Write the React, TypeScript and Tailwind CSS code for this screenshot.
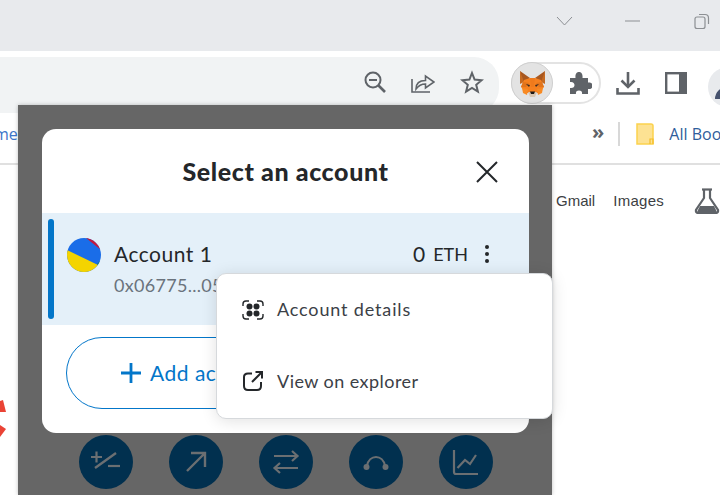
import React from 'react'

const mm = "font-['Lato','Inter',sans-serif]"

function Fox() {
  return (
    <svg viewBox="0 0 27 27" className="w-[27px] h-[27px]">
      <polygon points="1,1 11,8 5,12 2,11" fill="#a8571f" />
      <polygon points="26,1 16,8 22,12 25,11" fill="#a8571f" />
      <polygon points="1,1 5,12 1,14" fill="#c56a22" />
      <polygon points="26,1 22,12 26,14" fill="#c56a22" />
      <polygon points="5,10 11,8 16,8 22,10 25,17 20,23 7,23 2,17" fill="#f5801f" />
      <polygon points="11,8 16,8 15,17 12,17" fill="#ef7a1c" />
      <polygon points="4,12 10,13 7,17 2,17" fill="#e2741b" />
      <polygon points="23,12 17,13 20,17 25,17" fill="#e2741b" />
      <polygon points="7,14 11,15 10,17" fill="#3a2a22" />
      <polygon points="20,14 16,15 17,17" fill="#3a2a22" />
      <polygon points="3,18 9,19 8,25 4,23" fill="#f88a23" />
      <polygon points="24,18 18,19 19,25 23,23" fill="#f88a23" />
      <polygon points="9,22 18,22 16,27 11,27" fill="#d8c6b2" />
      <polygon points="11,21.5 16,21.5 15,24 12,24" fill="#1c1714" />
    </svg>
  )
}

function RoundButton({ children }: { children: React.ReactNode }) {
  return (
    <div className="w-[54px] h-[54px] rounded-full bg-[#01304f] flex items-center justify-center">
      <svg viewBox="0 0 54 54" className="w-[54px] h-[54px]" fill="none" stroke="#6b6f72" strokeWidth="2.2">
        {children}
      </svg>
    </div>
  )
}

export default function App() {
  return (
    <div className="relative w-[720px] h-[495px] overflow-hidden bg-white font-['Liberation_Sans',sans-serif]">
      {/* title bar */}
      <div className="h-[51px] bg-[#e8eaed] flex">
        <svg viewBox="0 0 170 51" className="w-[170px] h-[51px] ml-auto" fill="none" stroke="#8c8f93" strokeWidth="1">
          <path d="M7 17 L14.5 25 L22 17" />
          <path d="M75 21 H90" />
          <rect x="145" y="17" width="10" height="11.5" rx="2" strokeWidth="1.2" />
          <path d="M149 14.5 H155 Q158.5 14.5 158.5 18 V24" strokeWidth="1.2" />
        </svg>
      </div>

      {/* toolbar */}
      <div className="h-[56px] flex items-start">
        <div className="w-[499px] shrink-0 h-[56px] mt-[6px] bg-[#f1f3f4] rounded-r-[25px] flex items-center justify-end gap-[25px] pr-[15px] pb-[7px]">
          <svg viewBox="0 0 22 22" className="w-[22px] h-[22px]" fill="none" stroke="#5f6368" strokeWidth="2">
            <circle cx="9" cy="9" r="7.5" />
            <path d="M5 9 H13" />
            <path d="M14.5 14.5 L21 21" strokeWidth="2.6" />
          </svg>
          <svg viewBox="0 0 24 22" className="w-[24px] h-[22px]" fill="none" stroke="#5f6368" strokeWidth="1.6">
            <path d="M1 8 V21 H19" />
            <path d="M5 18 C5 12 9 9.5 14.5 9.5 V5 L23 11 L14.5 17 V13 C10 13 7.5 14.5 5 18 Z" />
          </svg>
          <svg viewBox="0 0 24 24" className="w-[24px] h-[24px]" fill="none" stroke="#5f6368" strokeWidth="2">
            <path d="M12 3 L14.6 9.6 L21.6 10.2 L16.2 14.8 L17.9 21.6 L12 18 L6.1 21.6 L7.8 14.8 L2.4 10.2 L9.4 9.6 Z" />
          </svg>
        </div>
        <div className="ml-[12px] mt-[11px] w-[90px] shrink-0 h-[42px] rounded-full border-2 border-[#e3e3e3] flex items-center relative">
          <div className="w-[42px] h-[42px] -ml-[2px] rounded-full bg-[#e3e3e3] border border-[#cfcfcf] flex items-center justify-center shrink-0">
            <Fox />
          </div>
          <svg viewBox="0 0 24 24" className="w-[24px] h-[24px] ml-[15px]" fill="#5f6368">
            <path d="M2 7 H7.5 C7 2.5 9 1 11 1 C13 1 15 2.5 14.5 7 H20 V11.5 C24 11 24.5 13.5 24.5 15 C24.5 17 23 18.5 20 18 V23 H14 C14.5 20.5 13 19.5 11 19.5 C9 19.5 7.5 20.5 8 23 H2 V17 C5 17.5 6.5 16 6.5 14 C6.5 12 5 10.5 2 11 Z" />
          </svg>
        </div>
        <svg viewBox="0 0 24 24" className="w-[24px] h-[24px] shrink-0 ml-[15px] mt-[20px]" fill="none" stroke="#5f6368" strokeWidth="2.6">
          <path d="M12 1 V15" />
          <path d="M5.5 9.5 L12 16 L18.5 9.5" />
          <path d="M1.5 17 V22.5 H22.5 V17" />
        </svg>
        <svg viewBox="0 0 22 22" className="w-[22px] h-[22px] shrink-0 ml-[25px] mt-[21px]" fill="none">
          <rect x="1.2" y="1.2" width="19.6" height="19.6" stroke="#5f6368" strokeWidth="2.4" />
          <rect x="14" y="1" width="7" height="20" fill="#5f6368" />
        </svg>
        <div className="w-[40px] h-[40px] ml-[21px] mt-[16px] shrink-0 rounded-full bg-[#e8eaed] overflow-hidden flex items-end justify-start">
          <div className="w-[24px] h-[12px] mb-[8px] ml-[7px] shrink-0 rounded-t-full bg-[#46526e]" />
        </div>
      </div>

      {/* bookmarks bar */}
      <div className="h-[58px] border-b-2 border-[#e0e0e0] flex items-center pb-[2px] whitespace-nowrap text-[16px] font-['Open_Sans',sans-serif] text-[#3c4043]">
        <span className="w-[26px] -ml-[6px] shrink-0 text-[#3d76c9]">me</span>
        <span className="ml-[572px] shrink-0 text-[#5f6368] font-bold text-[20px] leading-none -mt-[4px]">»</span>
        <div className="ml-[14px] w-[2px] shrink-0 h-[24px] bg-[#d8d8d8]" />
        <svg viewBox="0 0 18 22" className="w-[18px] h-[22px] shrink-0 ml-[16px]">
          <path d="M1 1 H15 Q17 1 17 3 V21 H1 Z" fill="#fde293" stroke="#fbd24e" strokeWidth="1.5" />
          <path d="M14 21 V16 H17 V21" fill="none" stroke="#f4bd2a" strokeWidth="1.2" />
        </svg>
        <span className="ml-[15px] shrink-0 text-[#2f5d9b]">All Bookmarks</span>
      </div>

      {/* page links */}
      <div className="flex items-center pl-[556px] h-[74px] -mt-[1px] text-[15px] text-[#3c4043] whitespace-nowrap">
        <span className="shrink-0">Gmail</span>
        <span className="ml-[18px] shrink-0 tracking-[0.3px]">Images</span>
        <svg viewBox="0 0 26 26" className="w-[26px] h-[26px] ml-[30px] shrink-0" fill="none" stroke="#5f6368" strokeWidth="2.2">
          <path d="M8 1.5 H18" />
          <path d="M10 2 V10 L2 22 Q1.5 25 4 25 H22 Q24.5 25 24 22 L16 10 V2" />
          <path d="M6 18 H20 L23 24 H3 Z" fill="#5f6368" stroke="none" />
        </svg>
      </div>

      {/* red piece of the logo behind the popup */}
      <svg viewBox="0 0 6 40" className="absolute left-0 top-[399px] w-[6px] h-[40px]" fill="#ea4335">
        <polygon points="0,2 3,1 6,13 0,13" />
        <polygon points="0,26 6,30 0,38" />
      </svg>

      {/* extension popup */}
      <div className={`absolute left-[18px] top-[105px] w-[534px] h-[390px] bg-[#666666] shadow-[0_0_4px_rgba(0,0,0,0.25)] pt-[24px] px-[24px] ${mm}`}>
        <div className="w-[487px] h-[304px] bg-white rounded-[14px] overflow-hidden">
          <div className="h-[84px] relative flex items-center justify-center pt-[2px]">
            <span className="text-[25px] font-black text-[#24272a] tracking-[0.6px]">Select an account</span>
            <svg viewBox="0 0 22 22" className="absolute right-[31px] top-[32px] w-[22px] h-[22px]" fill="none" stroke="#24272a" strokeWidth="2">
              <path d="M1 1 L21 21 M21 1 L1 21" />
            </svg>
          </div>
          <div className="h-[112px] bg-[#e4f0f9] flex items-start relative pl-[25px]">
            <div className="absolute left-[6px] top-[6px] w-[6px] h-[100px] rounded-full bg-[#0376c9]" />
            <svg viewBox="0 0 34 34" className="w-[34px] h-[34px] mt-[25px]">
              <defs>
                <clipPath id="avatar-clip"><circle cx="17" cy="17" r="17" /></clipPath>
              </defs>
              <g clipPath="url(#avatar-clip)">
                <rect width="34" height="34" fill="#1a6de8" />
                <polygon points="19,0 34,0 34,12" fill="#c2193f" />
                <polygon points="30,34 34,34 34,22 30,26" fill="#0b7d7d" />
                <polygon points="0,12 31,27 28,34 0,34" fill="#f4d400" />
              </g>
            </svg>
            <div className="ml-[13px] mt-[25px]">
              <div className="text-[21px] leading-[32px] text-[#24272a] tracking-[0.5px]">Account 1</div>
              <div className="text-[18px] leading-[24px] mt-[3px] text-[#6a737d] tracking-[0.3px]">0x06775...05a3</div>
            </div>
            <div className="ml-auto mr-[40px] mt-[25px] flex items-center h-[32px] text-[#24272a]">
              <span className="text-[21px]">0</span>
              <span className="text-[18px] ml-[8px]">ETH</span>
              <svg viewBox="0 0 4 18" className="w-[4px] h-[18px] ml-[17px]" fill="#24272a">
                <circle cx="2" cy="2" r="2" />
                <circle cx="2" cy="9" r="2" />
                <circle cx="2" cy="16" r="2" />
              </svg>
            </div>
          </div>
          <div className="mx-[24px] mt-[12px] h-[72px] rounded-full border border-[#0376c9] flex items-center pl-[54px] text-[#0376c9] text-[21px] tracking-[0.5px]">
            <svg viewBox="0 0 20 20" className="w-[20px] h-[20px] mr-[9px]" fill="none" stroke="#0376c9" strokeWidth="2.8">
              <path d="M10 0 V20 M0 10 H20" />
            </svg>
            Add account
          </div>
        </div>

        <div className="flex gap-[36px] mt-[2px] ml-[37px]">
          <RoundButton>
            <path d="M16 33 L37 18" strokeWidth="2.4" />
            <path d="M12 22 H23 M17.5 16.5 V27.5" />
            <path d="M29 31 H41" />
          </RoundButton>
          <RoundButton>
            <path d="M18 36 L36 18 M22 18 H36 V32" strokeWidth="2.4" />
          </RoundButton>
          <RoundButton>
            <path d="M15 21 H38 M33 16 L38.5 21 L33 26" />
            <path d="M39 33 H16 M21 28 L15.5 33 L21 38" />
          </RoundButton>
          <RoundButton>
            <path d="M18 31 C20 19 34 19 36 31" />
            <circle cx="17.5" cy="32" r="3" fill="#6b6f72" stroke="none" />
            <circle cx="36.5" cy="32" r="3" fill="#6b6f72" stroke="none" />
          </RoundButton>
          <RoundButton>
            <path d="M15 15 V37 Q15 39 17 39 H39" />
            <path d="M18.5 33 L26 25 L31 29 L37 20" />
          </RoundButton>
        </div>

        {/* account menu */}
        <div className="absolute left-[198px] top-[168px] w-[337px] h-[146px] bg-white rounded-[10px] border border-[#d6d9dc] shadow-[0_2px_16px_rgba(0,0,0,0.12)] flex flex-col text-[18px] text-[#3b4046]">
          <div className="h-[71px] flex items-center pl-[25px] gap-[13px] tracking-[0.85px]">
            <svg viewBox="0 0 22 20" className="w-[22px] h-[20px]" fill="none" stroke="#24272a" strokeWidth="1.4">
              <path d="M1 6 V4 Q1 1 4 1 H7 M15 1 H18 Q21 1 21 4 V6 M21 14 V16 Q21 19 18 19 H15 M7 19 H4 Q1 19 1 16 V14" />
              <circle cx="7.5" cy="6.5" r="3" fill="#24272a" stroke="none" />
              <circle cx="14.5" cy="6.5" r="3" fill="#24272a" stroke="none" />
              <circle cx="7.5" cy="13.5" r="3" fill="#24272a" stroke="none" />
              <circle cx="14.5" cy="13.5" r="3" fill="#24272a" stroke="none" />
            </svg>
            <span>Account details</span>
          </div>
          <div className="h-[72px] flex items-center pl-[26px] gap-[14px] tracking-[0.45px]">
            <svg viewBox="0 0 20 20" className="w-[20px] h-[20px]" fill="none" stroke="#24272a" strokeWidth="2">
              <path d="M9 2.5 H5 Q1 2.5 1 6 V15 Q1 19 5 19 H14 Q18 19 18 15 V11" />
              <path d="M9 11 L19 1 M12.5 1 H19 V7.5" />
            </svg>
            <span>View on explorer</span>
          </div>
        </div>
      </div>
    </div>
  )
}
